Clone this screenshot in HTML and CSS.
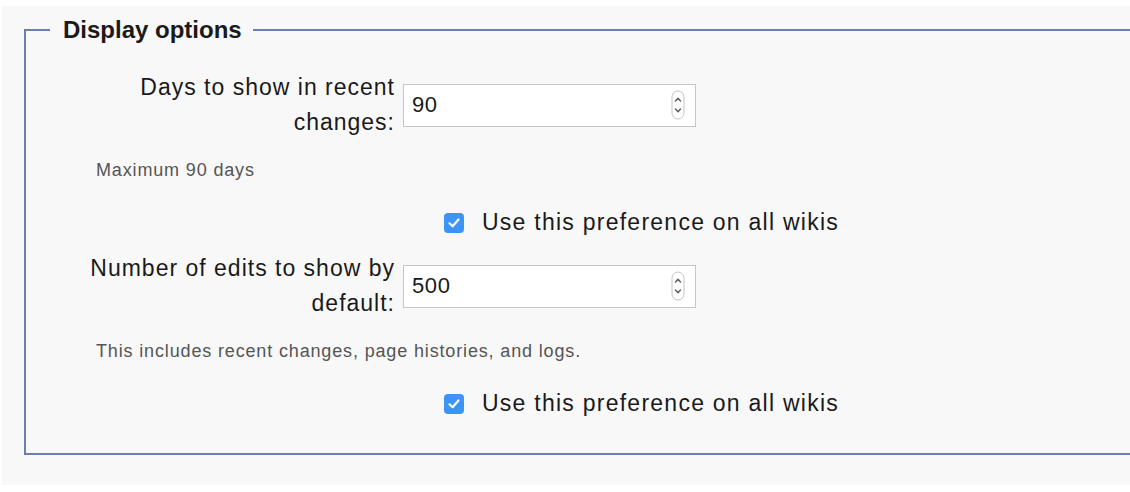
FILE: index.html
```html
<!DOCTYPE html>
<html>
<head>
<meta charset="utf-8">
<link rel="stylesheet" href="styles.css">
</head>
<body>
<div class="page">
  <fieldset class="options">
    <legend class="options-title">Display options</legend>

    <div class="pref">
      <div class="field-row">
        <label class="field-label" for="days">Days to show in recent changes:</label>
        <div class="num-input">
          <input id="days" class="num-field" type="text" value="90">
          <svg class="spinner" width="14" height="30" viewBox="0 0 14 30">
            <rect x="1" y="1" width="12" height="28" rx="6" ry="6" fill="#fff" stroke="#c4c4c4" stroke-width="1"/>
            <path d="M4.5 11 L7 8.3 L9.5 11" fill="none" stroke="#5f5f5f" stroke-width="1.5" stroke-linecap="round" stroke-linejoin="round"/>
            <path d="M4.5 19 L7 21.7 L9.5 19" fill="none" stroke="#5f5f5f" stroke-width="1.5" stroke-linecap="round" stroke-linejoin="round"/>
          </svg>
        </div>
      </div>
      <div class="help">Maximum 90 days</div>
      <div class="check-row">
        <span class="checkbox"><svg width="20" height="20" viewBox="0 0 20 20"><path d="M5.5 10.3 L8.6 13.3 L14.5 6.5" fill="none" stroke="#fff" stroke-width="2.2" stroke-linecap="round" stroke-linejoin="round"/></svg></span>
        <span class="check-label">Use this preference on all wikis</span>
      </div>
    </div>

    <div class="pref pref-second">
      <div class="field-row">
        <label class="field-label" for="edits">Number of edits to show by default:</label>
        <div class="num-input">
          <input id="edits" class="num-field" type="text" value="500">
          <svg class="spinner" width="14" height="30" viewBox="0 0 14 30">
            <rect x="1" y="1" width="12" height="28" rx="6" ry="6" fill="#fff" stroke="#c4c4c4" stroke-width="1"/>
            <path d="M4.5 11 L7 8.3 L9.5 11" fill="none" stroke="#5f5f5f" stroke-width="1.5" stroke-linecap="round" stroke-linejoin="round"/>
            <path d="M4.5 19 L7 21.7 L9.5 19" fill="none" stroke="#5f5f5f" stroke-width="1.5" stroke-linecap="round" stroke-linejoin="round"/>
          </svg>
        </div>
      </div>
      <div class="help">This includes recent changes, page histories, and logs.</div>
      <div class="check-row">
        <span class="checkbox"><svg width="20" height="20" viewBox="0 0 20 20"><path d="M5.5 10.3 L8.6 13.3 L14.5 6.5" fill="none" stroke="#fff" stroke-width="2.2" stroke-linecap="round" stroke-linejoin="round"/></svg></span>
        <span class="check-label">Use this preference on all wikis</span>
      </div>
    </div>
  </fieldset>
</div>
</body>
</html>
```

FILE: styles.css
```css
html, body {
  margin: 0;
  padding: 0;
  background: #ffffff;
  overflow: hidden;
}

body {
  font-family: "Liberation Sans", Arial, sans-serif;
  color: #222222;
}

.page {
  margin: 6px 0 0 2px;
  height: 479px;
  background: #f8f8f8;
  padding-top: 10px;
  box-sizing: border-box;
  overflow: hidden;
}

.options {
  margin: 0 0 0 22px;
  width: 1140px;
  box-sizing: border-box;
  border: 2px solid #6a7fae;
  padding: 0 0 32px 0;
  min-inline-size: 0;
}

.options-title {
  margin-left: 24px;
  padding: 0 11px 0 13px;
  font-size: 24px;
  font-weight: bold;
  line-height: 28px;
  color: #1a1a1a;
}

.pref {
  padding-top: 26px;
}

.pref-second {
  padding-top: 11px;
}

.field-row {
  display: flex;
  align-items: center;
}

.field-label {
  width: 314px;
  margin-left: 55px;
  text-align: right;
  font-size: 23px;
  letter-spacing: 1px;
  line-height: 35px;
  color: #1a1a1a;
}

.num-input {
  position: relative;
  margin-left: 8px;
  width: 293px;
  height: 43px;
}

.num-field {
  width: 100%;
  height: 100%;
  box-sizing: border-box;
  border: 1px solid #c6c6c6;
  background: #ffffff;
  padding: 0 0 0 8px;
  margin: 0;
  font-family: "Liberation Sans", Arial, sans-serif;
  font-size: 22px;
  letter-spacing: 0.6px;
  color: #1a1a1a;
  outline: none;
}

.spinner {
  position: absolute;
  right: 11px;
  top: 6px;
}

.help {
  margin: 18px 0 0 70px;
  font-size: 18px;
  letter-spacing: 0.85px;
  line-height: 24px;
  color: #555555;
}

.check-row {
  display: flex;
  align-items: center;
  margin: 23px 0 0 418px;
  height: 35px;
}

.checkbox {
  display: flex;
  width: 20px;
  height: 20px;
  border-radius: 4px;
  background: #3d94f6;
  margin-right: 18px;
}

.check-label {
  font-size: 23px;
  letter-spacing: 1.25px;
  line-height: 35px;
  color: #1a1a1a;
}
```
